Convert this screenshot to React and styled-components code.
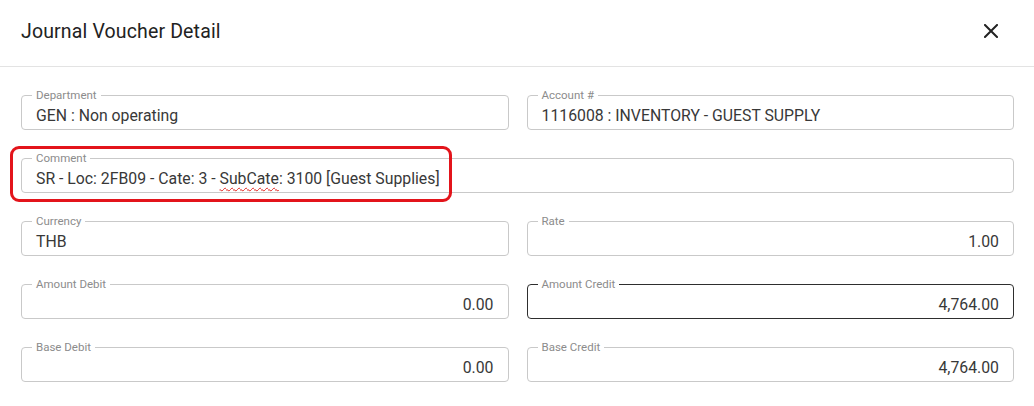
import styled, { createGlobalStyle } from "styled-components";

const GlobalStyle = createGlobalStyle`
  body {
    margin: 0;
    background: #ffffff;
    font-family: Roboto, "Liberation Sans", Arial, sans-serif;
  }
`;

const StDialog = styled.div`
  width: 1034px;
  height: 406px;
  background: #ffffff;
  overflow: hidden;
`;

const StHeader = styled.div`
  height: 66px;
  display: flex;
  align-items: center;
  justify-content: space-between;
  padding: 0 36px 0 21px;
  border-bottom: 1px solid #e3e3e3;
  box-sizing: content-box;
`;

const StTitle = styled.h2`
  margin: 0;
  font-size: 19.5px;
  font-weight: 400;
  color: #222222;
  letter-spacing: 0.15px;
  padding-bottom: 4px;
`;

const StCloseButton = styled.button`
  border: none;
  background: none;
  padding: 0;
  width: 14px;
  height: 14px;
  display: flex;
  cursor: pointer;
  margin-bottom: 4px;
`;

const StBody = styled.div`
  display: grid;
  grid-template-columns: 1fr 1fr;
  column-gap: 18px;
  row-gap: 28px;
  padding: 28px 20px 0 21px;
`;

const StWide = styled.div`
  grid-column: 1 / -1;
  position: relative;
`;

const StField = styled.div`
  position: relative;
  height: 35px;
  box-sizing: border-box;
  border: 1px solid ${(p) => (p.$active ? "#2e2e2e" : "#c9c9c9")};
  border-radius: 4px;
  display: flex;
  align-items: center;
  justify-content: ${(p) => (p.$right ? "flex-end" : "flex-start")};
  padding: 6px 14px 0 14px;
`;

const StLabel = styled.span`
  position: absolute;
  top: -7px;
  left: 10px;
  padding: 0 4px;
  background: #ffffff;
  font-size: 11.5px;
  line-height: 13px;
  color: #8c8c8c;
`;

const StValue = styled.span`
  font-size: 15.8px;
  color: #383838;
  white-space: nowrap;
`;

const StSpell = styled.span`
  text-decoration-line: underline;
  text-decoration-style: wavy;
  text-decoration-color: #e0241f;
  text-decoration-thickness: 1px;
  text-underline-offset: 3px;
`;

const StHighlight = styled.div`
  position: absolute;
  left: -11px;
  top: -12px;
  width: 442px;
  height: 56px;
  box-sizing: border-box;
  border: 3px solid #e3141b;
  border-radius: 9px;
  pointer-events: none;
`;

function Field({ label, value, right, active }) {
  return (
    <StField $right={right} $active={active}>
      <StLabel>{label}</StLabel>
      <StValue>{value}</StValue>
    </StField>
  );
}

export default function App() {
  return (
    <>
      <GlobalStyle />
      <StDialog>
        <StHeader>
          <StTitle>Journal Voucher Detail</StTitle>
          <StCloseButton aria-label="close">
            <svg width="14" height="14" viewBox="0 0 14 14">
              <path
                d="M1 1 L13 13 M13 1 L1 13"
                stroke="#222222"
                strokeWidth="2"
                strokeLinecap="square"
              />
            </svg>
          </StCloseButton>
        </StHeader>
        <StBody>
          <Field label="Department" value="GEN : Non operating" />
          <Field label="Account #" value="1116008 : INVENTORY - GUEST SUPPLY" />
          <StWide>
            <Field
              label="Comment"
              value={
                <>
                  SR - Loc: 2FB09 - Cate: 3 - <StSpell>SubCate</StSpell>: 3100
                  [Guest Supplies]
                </>
              }
            />
            <StHighlight />
          </StWide>
          <Field label="Currency" value="THB" />
          <Field label="Rate" value="1.00" right />
          <Field label="Amount Debit" value="0.00" right />
          <Field label="Amount Credit" value="4,764.00" right active />
          <Field label="Base Debit" value="0.00" right />
          <Field label="Base Credit" value="4,764.00" right />
        </StBody>
      </StDialog>
    </>
  );
}
